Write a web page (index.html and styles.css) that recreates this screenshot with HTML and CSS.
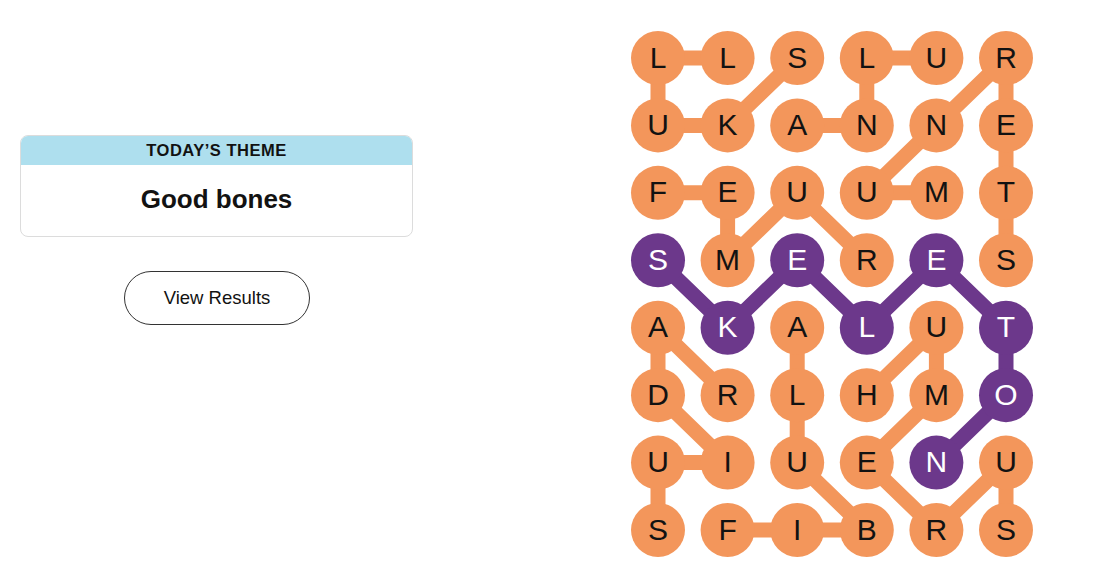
FILE: index.html
```html
<!DOCTYPE html>
<html lang="en">
<head>
<meta charset="utf-8">
<title>Strands</title>
<link rel="stylesheet" href="styles.css">
</head>
<body>
<main class="page">
  <section class="side">
    <div class="theme-card">
      <div class="theme-head">TODAY’S THEME</div>
      <div class="theme-body">Good bones</div>
    </div>
    <button class="results-btn" type="button">View Results</button>
  </section>

  <svg class="board" width="416" height="540" viewBox="0 0 416 540" xmlns="http://www.w3.org/2000/svg">
    <g class="links">
      <polyline class="link" points="173.2,34 103.6,101.43 34,101.43 34,34 103.6,34"/>
      <polyline class="link" points="312.4,34 242.8,34 242.8,101.43 173.2,101.43"/>
      <polyline class="link" points="382,236.29 382,168.86 382,101.43 382,34 312.4,101.43 242.8,168.86 312.4,168.86"/>
      <polyline class="link" points="34,168.86 103.6,168.86 103.6,236.29 173.2,168.86 242.8,236.29"/>
      <polyline class="link" points="103.6,371.14 34,303.71 34,371.14 103.6,438.57 34,438.57 34,506"/>
      <polyline class="link" points="103.6,506 173.2,506 242.8,506 173.2,438.57 173.2,371.14 173.2,303.71"/>
      <polyline class="link" points="242.8,371.14 312.4,303.71 312.4,371.14 242.8,438.57 312.4,506 382,438.57 382,506"/>
      <polyline class="link link-span" points="34,236.29 103.6,303.71 173.2,236.29 242.8,303.71 312.4,236.29 382,303.71 382,371.14 312.4,438.57"/>
    </g>
    <g class="nodes">
      <!-- row 0 -->
      <circle class="node" cx="34" cy="34" r="27"/><text class="letter" x="34" y="43.6">L</text>
      <circle class="node" cx="103.6" cy="34" r="27"/><text class="letter" x="103.6" y="43.6">L</text>
      <circle class="node" cx="173.2" cy="34" r="27"/><text class="letter" x="173.2" y="43.6">S</text>
      <circle class="node" cx="242.8" cy="34" r="27"/><text class="letter" x="242.8" y="43.6">L</text>
      <circle class="node" cx="312.4" cy="34" r="27"/><text class="letter" x="312.4" y="43.6">U</text>
      <circle class="node" cx="382" cy="34" r="27"/><text class="letter" x="382" y="43.6">R</text>
      <!-- row 1 -->
      <circle class="node" cx="34" cy="101.43" r="27"/><text class="letter" x="34" y="111.03">U</text>
      <circle class="node" cx="103.6" cy="101.43" r="27"/><text class="letter" x="103.6" y="111.03">K</text>
      <circle class="node" cx="173.2" cy="101.43" r="27"/><text class="letter" x="173.2" y="111.03">A</text>
      <circle class="node" cx="242.8" cy="101.43" r="27"/><text class="letter" x="242.8" y="111.03">N</text>
      <circle class="node" cx="312.4" cy="101.43" r="27"/><text class="letter" x="312.4" y="111.03">N</text>
      <circle class="node" cx="382" cy="101.43" r="27"/><text class="letter" x="382" y="111.03">E</text>
      <!-- row 2 -->
      <circle class="node" cx="34" cy="168.86" r="27"/><text class="letter" x="34" y="178.46">F</text>
      <circle class="node" cx="103.6" cy="168.86" r="27"/><text class="letter" x="103.6" y="178.46">E</text>
      <circle class="node" cx="173.2" cy="168.86" r="27"/><text class="letter" x="173.2" y="178.46">U</text>
      <circle class="node" cx="242.8" cy="168.86" r="27"/><text class="letter" x="242.8" y="178.46">U</text>
      <circle class="node" cx="312.4" cy="168.86" r="27"/><text class="letter" x="312.4" y="178.46">M</text>
      <circle class="node" cx="382" cy="168.86" r="27"/><text class="letter" x="382" y="178.46">T</text>
      <!-- row 3 -->
      <circle class="node node-span" cx="34" cy="236.29" r="27"/><text class="letter letter-span" x="34" y="245.89">S</text>
      <circle class="node" cx="103.6" cy="236.29" r="27"/><text class="letter" x="103.6" y="245.89">M</text>
      <circle class="node node-span" cx="173.2" cy="236.29" r="27"/><text class="letter letter-span" x="173.2" y="245.89">E</text>
      <circle class="node" cx="242.8" cy="236.29" r="27"/><text class="letter" x="242.8" y="245.89">R</text>
      <circle class="node node-span" cx="312.4" cy="236.29" r="27"/><text class="letter letter-span" x="312.4" y="245.89">E</text>
      <circle class="node" cx="382" cy="236.29" r="27"/><text class="letter" x="382" y="245.89">S</text>
      <!-- row 4 -->
      <circle class="node" cx="34" cy="303.71" r="27"/><text class="letter" x="34" y="313.31">A</text>
      <circle class="node node-span" cx="103.6" cy="303.71" r="27"/><text class="letter letter-span" x="103.6" y="313.31">K</text>
      <circle class="node" cx="173.2" cy="303.71" r="27"/><text class="letter" x="173.2" y="313.31">A</text>
      <circle class="node node-span" cx="242.8" cy="303.71" r="27"/><text class="letter letter-span" x="242.8" y="313.31">L</text>
      <circle class="node" cx="312.4" cy="303.71" r="27"/><text class="letter" x="312.4" y="313.31">U</text>
      <circle class="node node-span" cx="382" cy="303.71" r="27"/><text class="letter letter-span" x="382" y="313.31">T</text>
      <!-- row 5 -->
      <circle class="node" cx="34" cy="371.14" r="27"/><text class="letter" x="34" y="380.74">D</text>
      <circle class="node" cx="103.6" cy="371.14" r="27"/><text class="letter" x="103.6" y="380.74">R</text>
      <circle class="node" cx="173.2" cy="371.14" r="27"/><text class="letter" x="173.2" y="380.74">L</text>
      <circle class="node" cx="242.8" cy="371.14" r="27"/><text class="letter" x="242.8" y="380.74">H</text>
      <circle class="node" cx="312.4" cy="371.14" r="27"/><text class="letter" x="312.4" y="380.74">M</text>
      <circle class="node node-span" cx="382" cy="371.14" r="27"/><text class="letter letter-span" x="382" y="380.74">O</text>
      <!-- row 6 -->
      <circle class="node" cx="34" cy="438.57" r="27"/><text class="letter" x="34" y="448.17">U</text>
      <circle class="node" cx="103.6" cy="438.57" r="27"/><text class="letter" x="103.6" y="448.17">I</text>
      <circle class="node" cx="173.2" cy="438.57" r="27"/><text class="letter" x="173.2" y="448.17">U</text>
      <circle class="node" cx="242.8" cy="438.57" r="27"/><text class="letter" x="242.8" y="448.17">E</text>
      <circle class="node node-span" cx="312.4" cy="438.57" r="27"/><text class="letter letter-span" x="312.4" y="448.17">N</text>
      <circle class="node" cx="382" cy="438.57" r="27"/><text class="letter" x="382" y="448.17">U</text>
      <!-- row 7 -->
      <circle class="node" cx="34" cy="506" r="27"/><text class="letter" x="34" y="515.6">S</text>
      <circle class="node" cx="103.6" cy="506" r="27"/><text class="letter" x="103.6" y="515.6">F</text>
      <circle class="node" cx="173.2" cy="506" r="27"/><text class="letter" x="173.2" y="515.6">I</text>
      <circle class="node" cx="242.8" cy="506" r="27"/><text class="letter" x="242.8" y="515.6">B</text>
      <circle class="node" cx="312.4" cy="506" r="27"/><text class="letter" x="312.4" y="515.6">R</text>
      <circle class="node" cx="382" cy="506" r="27"/><text class="letter" x="382" y="515.6">S</text>
    </g>
  </svg>
</main>
</body>
</html>
```

FILE: styles.css
```css
* {
  box-sizing: border-box;
}

html, body {
  margin: 0;
  padding: 0;
  background: #ffffff;
}

body {
  font-family: "Liberation Sans", Arial, sans-serif;
  color: #121212;
}

.page {
  display: flex;
  align-items: flex-start;
  padding-left: 20px;
  gap: 211px;
  width: 1095px;
  height: 580px;
}

.side {
  width: 393px;
  margin-top: 135px;
  display: flex;
  flex-direction: column;
  align-items: center;
}

.theme-card {
  width: 100%;
  border: 1px solid #dcdcdc;
  border-radius: 8px;
  overflow: hidden;
  background: #ffffff;
}

.theme-head {
  height: 30px;
  margin: -1px -1px 0;
  background: #aedfee;
  display: flex;
  align-items: center;
  justify-content: center;
  font-size: 16.5px;
  font-weight: 700;
  letter-spacing: 0.5px;
  color: #121212;
  padding-top: 1px;
}

.theme-body {
  height: 71px;
  display: flex;
  align-items: center;
  justify-content: center;
  font-size: 26px;
  font-weight: 700;
  color: #121212;
  padding-bottom: 2px;
}

.results-btn {
  margin-top: 34px;
  width: 186px;
  height: 54px;
  border: 1px solid #333333;
  border-radius: 27px;
  background: #ffffff;
  font-family: "Liberation Sans", Arial, sans-serif;
  font-size: 18.5px;
  color: #121212;
  padding: 0 0 0 1px;
  cursor: pointer;
}

.board {
  display: block;
  margin-top: 24px;
  flex: none;
}

.link {
  fill: none;
  stroke: #f3965b;
  stroke-width: 15;
  stroke-linejoin: round;
  stroke-linecap: round;
}

.link-span {
  stroke: #6c388b;
}

.node {
  fill: #f3965b;
}

.node-span {
  fill: #6c388b;
}

.letter {
  font-family: "Liberation Sans", Arial, sans-serif;
  font-size: 30px;
  font-weight: 400;
  fill: #121212;
  text-anchor: middle;
}

.letter-span {
  fill: #ffffff;
}
```
